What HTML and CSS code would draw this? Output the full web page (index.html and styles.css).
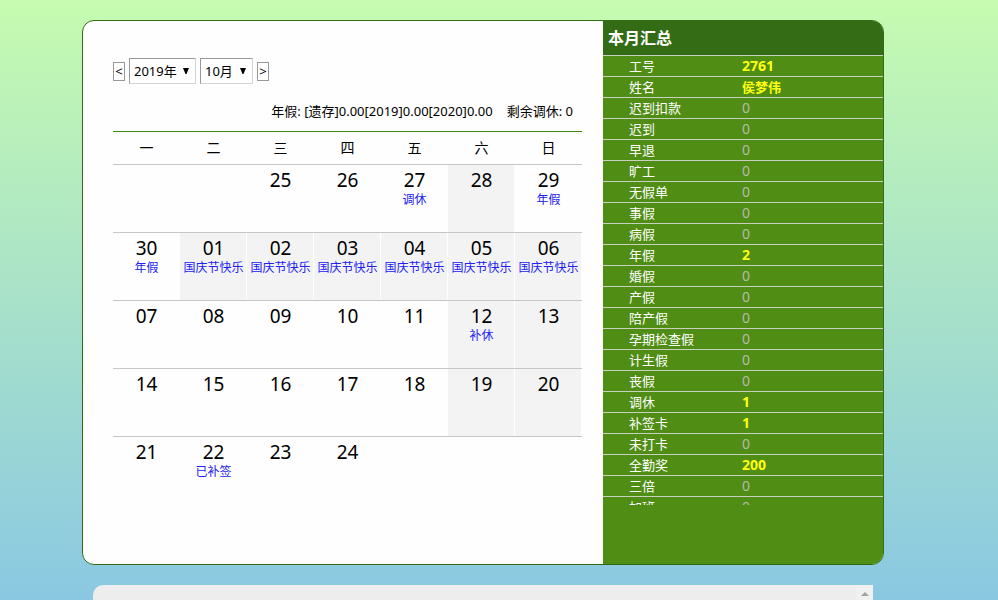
FILE: index.html
```html
<!DOCTYPE html>
<html lang="zh-CN">
<head>
<meta charset="utf-8">
<title>考勤日历</title>
<link rel="stylesheet" href="styles.css">
</head>
<body>
<main class="card">
  <section class="calendar">
    <form class="toolbar">
      <button class="step" type="button" aria-label="上个月">&lt;</button>
      <span class="picker">
        <select class="select select-year" aria-label="年份"><option>2019年</option></select>
        <svg class="arrow" viewBox="0 0 6 6" aria-hidden="true"><path d="M0 0H6L3.5 6H2.5Z"/></svg>
      </span>
      <span class="picker">
        <select class="select select-month" aria-label="月份"><option>10月</option></select>
        <svg class="arrow" viewBox="0 0 6 6" aria-hidden="true"><path d="M0 0H6L3.5 6H2.5Z"/></svg>
      </span>
      <button class="step" type="button" aria-label="下个月">&gt;</button>
    </form>
    <p class="balance"><span>年假: [遗存]0.00[2019]0.00[2020]0.00</span><span>剩余调休: 0</span></p>
    <table class="month">
      <thead>
        <tr><th>一</th><th>二</th><th>三</th><th>四</th><th>五</th><th>六</th><th>日</th></tr>
      </thead>
      <tbody>
        <tr><td></td><td></td><td>25</td><td>26</td><td>27<span class="note">调休</span></td><td class="off">28</td><td>29<span class="note">年假</span></td></tr>
        <tr><td>30<span class="note">年假</span></td><td class="off">01<span class="note">国庆节快乐</span></td><td class="off">02<span class="note">国庆节快乐</span></td><td class="off">03<span class="note">国庆节快乐</span></td><td class="off">04<span class="note">国庆节快乐</span></td><td class="off">05<span class="note">国庆节快乐</span></td><td class="off">06<span class="note">国庆节快乐</span></td></tr>
        <tr><td>07</td><td>08</td><td>09</td><td>10</td><td>11</td><td class="off">12<span class="note">补休</span></td><td class="off">13</td></tr>
        <tr><td>14</td><td>15</td><td>16</td><td>17</td><td>18</td><td class="off">19</td><td class="off">20</td></tr>
        <tr><td>21</td><td>22<span class="note">已补签</span></td><td>23</td><td>24</td><td></td><td></td><td></td></tr>
      </tbody>
    </table>
  </section>
  <aside class="summary">
    <h2 class="summary-title">本月汇总</h2>
    <div class="summary-list">
      <table class="stats">
        <tbody>
          <tr><th>工号</th><td class="hit">2761</td></tr>
          <tr><th>姓名</th><td class="hit name">侯梦伟</td></tr>
          <tr><th>迟到扣款</th><td>0</td></tr>
          <tr><th>迟到</th><td>0</td></tr>
          <tr><th>早退</th><td>0</td></tr>
          <tr><th>旷工</th><td>0</td></tr>
          <tr><th>无假单</th><td>0</td></tr>
          <tr><th>事假</th><td>0</td></tr>
          <tr><th>病假</th><td>0</td></tr>
          <tr><th>年假</th><td class="hit">2</td></tr>
          <tr><th>婚假</th><td>0</td></tr>
          <tr><th>产假</th><td>0</td></tr>
          <tr><th>陪产假</th><td>0</td></tr>
          <tr><th>孕期检查假</th><td>0</td></tr>
          <tr><th>计生假</th><td>0</td></tr>
          <tr><th>丧假</th><td>0</td></tr>
          <tr><th>调休</th><td class="hit">1</td></tr>
          <tr><th>补签卡</th><td class="hit">1</td></tr>
          <tr><th>未打卡</th><td>0</td></tr>
          <tr><th>全勤奖</th><td class="hit">200</td></tr>
          <tr><th>三倍</th><td>0</td></tr>
          <tr><th>加班</th><td>0</td></tr>
        </tbody>
      </table>
    </div>
  </aside>
</main>
<section class="details" aria-label="明细">
  <div class="scrollbar"><svg class="scroll-up" viewBox="0 0 8 4" aria-hidden="true"><path d="M0 4L4 0L8 4Z"/></svg></div>
</section>
</body>
</html>
```
FILE: styles.css
```css
* {
  box-sizing: border-box;
}

html {
  height: 100%;
}

body {
  display: flex;
  flex-direction: column;
  align-items: center;
  gap: 20px;
  height: 100vh;
  margin: 0;
  padding: 20px 48px 0 16px;
  overflow: hidden;
  background: linear-gradient(#c6fbb0, #8ac8e2);
  color: #000;
  font: 13px/20px "Noto Sans", "Noto Sans CJK SC", sans-serif;
}

.card {
  display: flex;
  flex-shrink: 0;
  width: 100%;
  max-width: 802px;
  border: 1px solid #336c14;
  border-radius: 12px;
  background: #fefefe;
  overflow: hidden;
}

.calendar {
  flex: 1;
  min-width: 0;
  padding: 37px 21px 59px 30px;
}

.toolbar {
  display: flex;
  align-items: center;
  gap: 4px;
}

.step {
  width: 12px;
  height: 19px;
  padding: 0;
  border: 1px solid #999;
  background: #fff;
  color: #000;
  font: inherit;
  line-height: 16px;
}

.picker {
  display: grid;
  align-items: center;
}

.select,
.arrow {
  grid-area: 1 / 1;
}

.select {
  height: 26px;
  padding: 0 4px;
  appearance: none;
  border: 1px solid;
  border-color: #999 #d4d4d4 #d4d4d4 #999;
  border-radius: 0;
  background: #fff;
  color: #000;
  font: inherit;
}

.select-year {
  width: 67px;
}

.select-month {
  width: 53px;
}

.arrow {
  justify-self: end;
  width: 6px;
  height: 6px;
  margin-right: 7px;
  pointer-events: none;
}

.balance {
  display: flex;
  justify-content: flex-end;
  gap: 14px;
  margin: 17px 0 10px;
  padding-right: 9px;
}

.month,
.stats {
  width: 100%;
  border-collapse: separate;
  border-spacing: 0;
  table-layout: fixed;
}

.month th {
  height: 34px;
  padding: 0;
  border-top: 1px solid #468410;
  border-bottom: 1px solid #c6c6c6;
  font-size: 14px;
  font-weight: 400;
}

.month td {
  height: 68px;
  padding: 5px 0 0;
  border-bottom: 1px solid #c6c6c6;
  font-size: 19px;
  line-height: 20px;
  text-align: center;
  vertical-align: top;
}

.month tr:last-child td {
  border-bottom: 0;
}

.month .off {
  background: linear-gradient(#f3f3f3, #f3f3f3) no-repeat 0 0 / calc(100% - 1px) 100%;
}

.note {
  display: block;
  color: #2020f4;
  font-size: 12px;
  line-height: 20px;
  white-space: nowrap;
}

.summary {
  flex: 0 0 280px;
  background: #508d14;
  color: #fff;
}

.summary-title {
  margin: 0;
  padding: 0 5px;
  background: #336c14;
  font-size: 16px;
  line-height: 34px;
}

.summary-list {
  height: 450px;
  overflow: hidden;
}

.stats th,
.stats td {
  height: 21px;
  padding: 0;
  border-top: 1px solid #c8d0c0;
  line-height: 20px;
  text-align: left;
  white-space: nowrap;
}

.stats th {
  width: 139px;
  padding-left: 26px;
  font-weight: 400;
}

.stats td {
  color: #b4bca8;
  font-size: 14px;
}

.stats .hit {
  color: #ff1;
  font-weight: 700;
}

.stats .name {
  font-size: 13px;
}

.details {
  display: flex;
  flex: 1 0 15px;
  justify-content: flex-end;
  width: calc(100% - 22px);
  max-width: 780px;
  border-top-left-radius: 10px;
  background: #ededed;
}

.scrollbar {
  width: 17px;
  padding: 7px 0 0 5px;
  background: #f1f1f1;
}

.scroll-up {
  display: block;
  width: 8px;
  height: 4px;
  fill: #a2a2a2;
}
```
